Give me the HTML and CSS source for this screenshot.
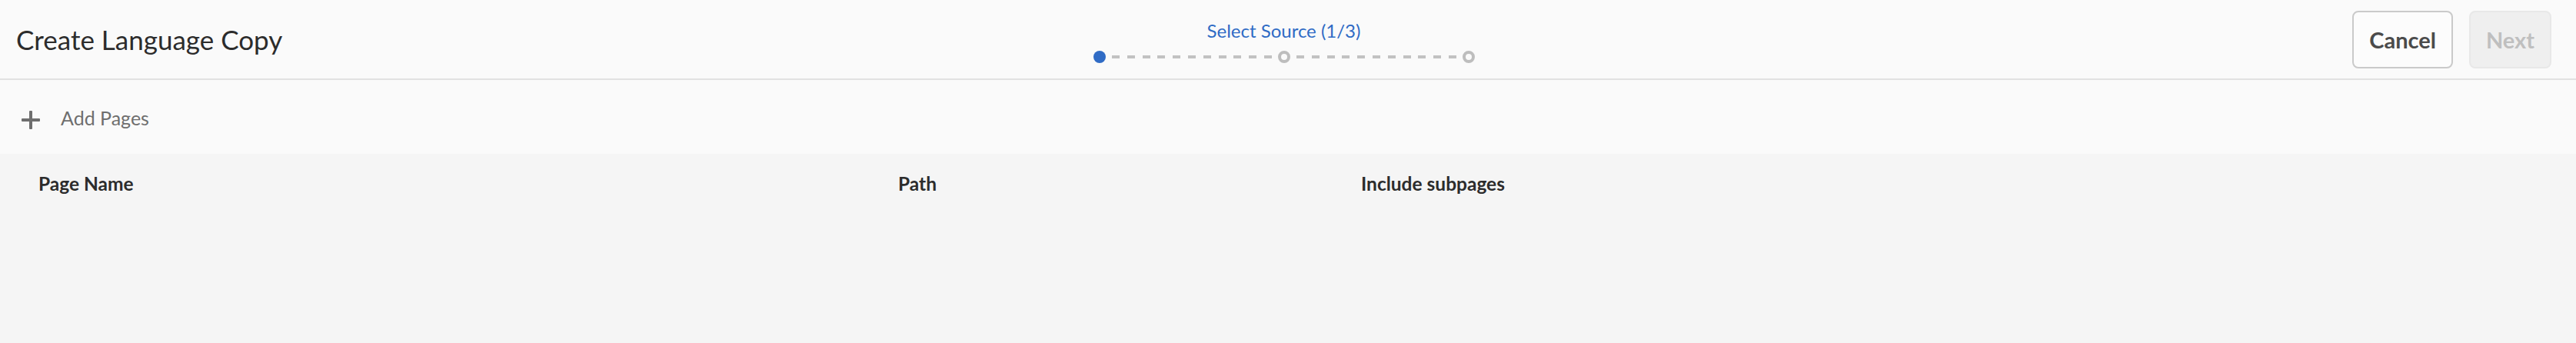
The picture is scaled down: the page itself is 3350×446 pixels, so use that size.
FILE: index.html
```html
<!DOCTYPE html>
<html lang="en">
<head>
<meta charset="utf-8">
<title>Create Language Copy</title>
<link rel="stylesheet" href="styles.css">
</head>
<body>
<div class="app">
  <header class="wizard-header">
    <h1 class="wizard-title">Create Language Copy</h1>
    <div class="stepper">
      <div class="step-label">Select Source (1/3)</div>
      <div class="step-track">
        <span class="dot dot-active"></span>
        <span class="seg"><span class="dashes"></span></span>
        <span class="dot"></span>
        <span class="seg"><span class="dashes"></span></span>
        <span class="dot"></span>
      </div>
    </div>
    <div class="actions">
      <button class="btn btn-cancel">Cancel</button>
      <button class="btn btn-next" disabled>Next</button>
    </div>
  </header>
  <div class="toolbar">
    <svg class="plus" width="24" height="24" viewBox="0 0 24 24" aria-hidden="true">
      <rect x="10" y="0" width="4" height="24" rx="1" fill="#6e6e6e"/>
      <rect x="0" y="10" width="24" height="4" rx="1" fill="#6e6e6e"/>
    </svg>
    <span class="toolbar-label">Add Pages</span>
  </div>
  <div class="table">
    <div class="table-head">
      <div class="th">Page Name</div>
      <div class="th">Path</div>
      <div class="th">Include subpages</div>
    </div>
  </div>
</div>
</body>
</html>
```

FILE: styles.css
```css
html, body {
  margin: 0;
  padding: 0;
  height: 100%;
}

body {
  font-family: Lato, "Liberation Sans", sans-serif;
  background: #f5f5f5;
  color: #2c2c2c;
}

.app {
  display: flex;
  flex-direction: column;
  height: 446px;
}

.wizard-header {
  display: grid;
  grid-template-columns: 1fr auto 1fr;
  align-items: center;
  height: 102px;
  padding: 0 32px 0 21px;
  background: #fafafa;
  border-bottom: 2px solid #e1e1e1;
}

.wizard-title {
  margin: 0;
  font-size: 35px;
  font-weight: 400;
  color: #2c2c2c;
  line-height: 1.2;
  white-space: nowrap;
}

.stepper {
  align-self: start;
  padding-top: 25px;
  display: flex;
  flex-direction: column;
  align-items: center;
}

.step-label {
  font-size: 24px;
  line-height: 29px;
  color: #2f6bc5;
  white-space: nowrap;
}

.step-track {
  margin-top: 12px;
  display: flex;
  align-items: center;
  height: 16px;
}

.dot {
  width: 16px;
  height: 16px;
  box-sizing: border-box;
  border-radius: 50%;
  border: 4px solid #bdbdbd;
  background: #fafafa;
}

.dot-active {
  border: none;
  background: #2f6bc5;
}

.seg {
  width: 224px;
  display: flex;
  justify-content: center;
}

.dashes {
  width: 208px;
  height: 4px;
  background: repeating-linear-gradient(to right, #c2c2c2 0 10px, transparent 10px 19.8px);
}

.actions {
  display: flex;
  justify-content: flex-end;
  gap: 21px;
}

.btn {
  height: 75px;
  box-sizing: border-box;
  border-radius: 8px;
  font-family: Lato, "Liberation Sans", sans-serif;
  font-size: 29px;
  font-weight: 700;
  padding: 0 20px;
}

.btn-cancel {
  background: #fcfcfc;
  border: 2px solid #cacaca;
  color: #4b4b4b;
}

.btn-next {
  background: #efefef;
  border: 2px solid #e8e8e8;
  color: #bfbfbf;
}

.toolbar {
  display: flex;
  align-items: center;
  height: 96px;
  padding-left: 28px;
  background: #fafafa;
}

.plus {
  display: block;
  margin-top: 8px;
}

.toolbar-label {
  margin-left: 27px;
  font-size: 25px;
  color: #6e6e6e;
  line-height: 30px;
  margin-top: 2px;
}

.table {
  flex: 1;
  background: #f5f5f5;
}

.table-head {
  display: grid;
  grid-template-columns: 1118px 602px 1fr;
  padding: 24px 0 0 48px;
}

.th {
  font-size: 24.5px;
  font-weight: 700;
  line-height: 1.2;
  color: #2c2c2c;
  padding-left: 2px;
}
```
